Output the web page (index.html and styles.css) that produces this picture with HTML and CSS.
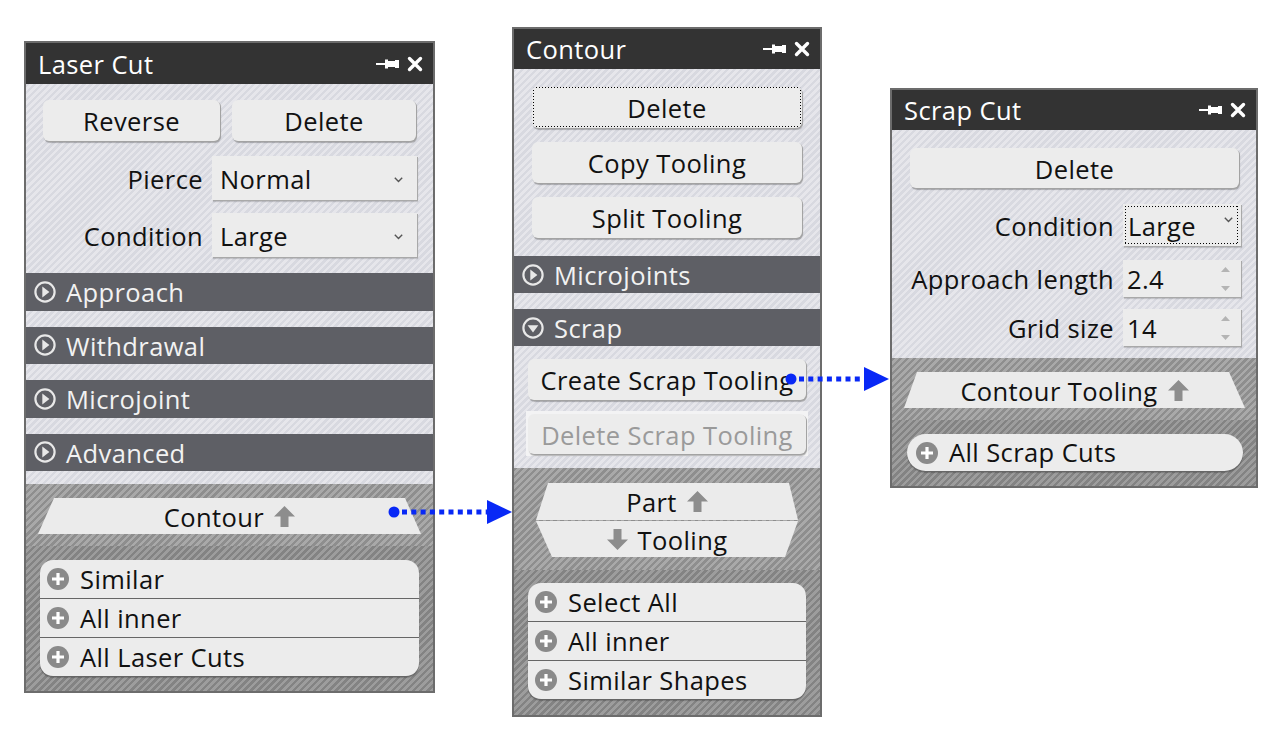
FILE: index.html
```html
<!DOCTYPE html>
<html>
<head>
<meta charset="utf-8">
<title>Tooling panels</title>
<link rel="stylesheet" href="styles.css">
</head>
<body>
<div class="desk">

  <section class="panel p1">
    <div class="head">
      <span class="title">Laser Cut</span>
      <span class="tools">
        <svg class="pin" width="24" height="12" viewBox="0 0 24 12"><path d="M0 5h9v2H0z M9 1.5h3v9H9z M12 3h8v6h-8z M19 2h4v8h-4z" fill="#fff"/></svg>
        <svg class="x" width="16" height="16" viewBox="0 0 16 16"><path d="M2.5 2.5L13.5 13.5M13.5 2.5L2.5 13.5" stroke="#fff" stroke-width="3.4" stroke-linecap="round"/></svg>
      </span>
    </div>
    <div class="light top1">
      <div class="btnrow">
        <div class="btn">Reverse</div>
        <div class="btn">Delete</div>
      </div>
      <div class="frow">
        <span class="lbl">Pierce</span>
        <div class="sel"><span>Normal</span><svg class="chev" width="9" height="6" viewBox="0 0 9 6"><path d="M0.8 0.8L4.5 4.5L8.2 0.8" fill="none" stroke="#555" stroke-width="1.4"/></svg></div>
      </div>
      <div class="frow">
        <span class="lbl">Condition</span>
        <div class="sel"><span>Large</span><svg class="chev" width="9" height="6" viewBox="0 0 9 6"><path d="M0.8 0.8L4.5 4.5L8.2 0.8" fill="none" stroke="#555" stroke-width="1.4"/></svg></div>
      </div>
    </div>
    <div class="light secs1">
      <div class="bar"><svg class="sico" width="22" height="22" viewBox="0 0 22 22"><circle cx="11" cy="11" r="9.6" fill="none" stroke="#e8e8e8" stroke-width="2.2"/><path d="M8.3 5.6L15.4 11L8.3 16.4z" fill="#e8e8e8"/></svg><span>Approach</span></div>
      <div class="bar"><svg class="sico" width="22" height="22" viewBox="0 0 22 22"><circle cx="11" cy="11" r="9.6" fill="none" stroke="#e8e8e8" stroke-width="2.2"/><path d="M8.3 5.6L15.4 11L8.3 16.4z" fill="#e8e8e8"/></svg><span>Withdrawal</span></div>
      <div class="bar"><svg class="sico" width="22" height="22" viewBox="0 0 22 22"><circle cx="11" cy="11" r="9.6" fill="none" stroke="#e8e8e8" stroke-width="2.2"/><path d="M8.3 5.6L15.4 11L8.3 16.4z" fill="#e8e8e8"/></svg><span>Microjoint</span></div>
      <div class="bar"><svg class="sico" width="22" height="22" viewBox="0 0 22 22"><circle cx="11" cy="11" r="9.6" fill="none" stroke="#e8e8e8" stroke-width="2.2"/><path d="M8.3 5.6L15.4 11L8.3 16.4z" fill="#e8e8e8"/></svg><span>Advanced</span></div>
    </div>
    <div class="nav nav1">
      <div class="trap up">
        <span>Contour</span>
        <svg class="arr" width="21" height="21" viewBox="0 0 21 21"><path d="M10.5 0L21 10.5H14.5V21H6.5V10.5H0z" fill="#8d8d8d"/></svg>
      </div>
    </div>
    <div class="listzone lz1">
      <div class="list">
        <div class="item"><svg class="plus" width="22" height="22" viewBox="0 0 22 22"><circle cx="11" cy="11" r="11" fill="#8a8a8a"/><path d="M5 9.4h12v3.2H5z M9.4 5h3.2v12H9.4z" fill="#fff"/></svg><span>Similar</span></div>
        <div class="item"><svg class="plus" width="22" height="22" viewBox="0 0 22 22"><circle cx="11" cy="11" r="11" fill="#8a8a8a"/><path d="M5 9.4h12v3.2H5z M9.4 5h3.2v12H9.4z" fill="#fff"/></svg><span>All inner</span></div>
        <div class="item"><svg class="plus" width="22" height="22" viewBox="0 0 22 22"><circle cx="11" cy="11" r="11" fill="#8a8a8a"/><path d="M5 9.4h12v3.2H5z M9.4 5h3.2v12H9.4z" fill="#fff"/></svg><span>All Laser Cuts</span></div>
      </div>
    </div>
  </section>

  <section class="panel p2">
    <div class="head">
      <span class="title">Contour</span>
      <span class="tools">
        <svg class="pin" width="24" height="12" viewBox="0 0 24 12"><path d="M0 5h9v2H0z M9 1.5h3v9H9z M12 3h8v6h-8z M19 2h4v8h-4z" fill="#fff"/></svg>
        <svg class="x" width="16" height="16" viewBox="0 0 16 16"><path d="M2.5 2.5L13.5 13.5M13.5 2.5L2.5 13.5" stroke="#fff" stroke-width="3.4" stroke-linecap="round"/></svg>
      </span>
    </div>
    <div class="light top2">
      <div class="btn focus">Delete</div>
      <div class="btn">Copy Tooling</div>
      <div class="btn">Split Tooling</div>
    </div>
    <div class="bar"><svg class="sico" width="22" height="22" viewBox="0 0 22 22"><circle cx="11" cy="11" r="9.6" fill="none" stroke="#e8e8e8" stroke-width="2.2"/><path d="M8.3 5.6L15.4 11L8.3 16.4z" fill="#e8e8e8"/></svg><span>Microjoints</span></div>
    <div class="light gap16"></div>
    <div class="bar"><svg class="sico" width="22" height="22" viewBox="0 0 22 22"><circle cx="11" cy="11" r="9.6" fill="none" stroke="#e8e8e8" stroke-width="2.2"/><path d="M5.6 8.3H16.4L11 15.4z" fill="#e8e8e8"/></svg><span>Scrap</span></div>
    <div class="light exp2">
      <div class="btn">Create Scrap Tooling</div>
      <div class="disabled"><div class="btn">Delete Scrap Tooling</div></div>
    </div>
    <div class="nav nav2">
      <div class="hex part">
        <span>Part</span>
        <svg class="arr" width="21" height="21" viewBox="0 0 21 21"><path d="M10.5 0L21 10.5H14.5V21H6.5V10.5H0z" fill="#8d8d8d"/></svg>
      </div>
      <div class="hex tool">
        <svg class="arr" width="21" height="21" viewBox="0 0 21 21"><path d="M10.5 21L21 10.5H14.5V0H6.5V10.5H0z" fill="#8d8d8d"/></svg>
        <span>Tooling</span>
      </div>
    </div>
    <div class="listzone lz2">
      <div class="list">
        <div class="item"><svg class="plus" width="22" height="22" viewBox="0 0 22 22"><circle cx="11" cy="11" r="11" fill="#8a8a8a"/><path d="M5 9.4h12v3.2H5z M9.4 5h3.2v12H9.4z" fill="#fff"/></svg><span>Select All</span></div>
        <div class="item"><svg class="plus" width="22" height="22" viewBox="0 0 22 22"><circle cx="11" cy="11" r="11" fill="#8a8a8a"/><path d="M5 9.4h12v3.2H5z M9.4 5h3.2v12H9.4z" fill="#fff"/></svg><span>All inner</span></div>
        <div class="item"><svg class="plus" width="22" height="22" viewBox="0 0 22 22"><circle cx="11" cy="11" r="11" fill="#8a8a8a"/><path d="M5 9.4h12v3.2H5z M9.4 5h3.2v12H9.4z" fill="#fff"/></svg><span>Similar Shapes</span></div>
      </div>
    </div>
  </section>

  <section class="panel p3">
    <div class="head">
      <span class="title">Scrap Cut</span>
      <span class="tools">
        <svg class="pin" width="24" height="12" viewBox="0 0 24 12"><path d="M0 5h9v2H0z M9 1.5h3v9H9z M12 3h8v6h-8z M19 2h4v8h-4z" fill="#fff"/></svg>
        <svg class="x" width="16" height="16" viewBox="0 0 16 16"><path d="M2.5 2.5L13.5 13.5M13.5 2.5L2.5 13.5" stroke="#fff" stroke-width="3.4" stroke-linecap="round"/></svg>
      </span>
    </div>
    <div class="light top3">
      <div class="btn del3">Delete</div>
      <div class="frow3 r-cond">
        <span class="lbl">Condition</span>
        <div class="sel sel3 focus2"><span>Large</span><svg class="chev" width="9" height="6" viewBox="0 0 9 6"><path d="M0.8 0.8L4.5 4.5L8.2 0.8" fill="none" stroke="#555" stroke-width="1.4"/></svg></div>
      </div>
      <div class="frow3 r-app">
        <span class="lbl">Approach length</span>
        <div class="sel num"><span>2.4</span><svg class="spin" width="11" height="26" viewBox="0 0 11 26"><path d="M1 6L5.5 1L10 6z M1 20L5.5 25L10 20z" fill="#b4b4b4"/></svg></div>
      </div>
      <div class="frow3 r-grid">
        <span class="lbl">Grid size</span>
        <div class="sel num"><span>14</span><svg class="spin" width="11" height="26" viewBox="0 0 11 26"><path d="M1 6L5.5 1L10 6z M1 20L5.5 25L10 20z" fill="#b4b4b4"/></svg></div>
      </div>
    </div>
    <div class="nav nav3">
      <div class="trap up">
        <span>Contour Tooling</span>
        <svg class="arr" width="21" height="21" viewBox="0 0 21 21"><path d="M10.5 0L21 10.5H14.5V21H6.5V10.5H0z" fill="#8d8d8d"/></svg>
      </div>
    </div>
    <div class="listzone lz3">
      <div class="list pill">
        <div class="item"><svg class="plus" width="22" height="22" viewBox="0 0 22 22"><circle cx="11" cy="11" r="11" fill="#8a8a8a"/><path d="M5 9.4h12v3.2H5z M9.4 5h3.2v12H9.4z" fill="#fff"/></svg><span>All Scrap Cuts</span></div>
      </div>
    </div>
  </section>

</div>

<svg class="links" width="1279" height="742" viewBox="0 0 1279 742">
  <g fill="#0828f6">
    <circle cx="394" cy="512" r="5.5"/>
    <polygon points="487,500 512,512 487,524"/>
    <circle cx="791" cy="379" r="5.5"/>
    <polygon points="864,367 889,379 864,391"/>
  </g>
  <g stroke="#0828f6" stroke-width="5" stroke-dasharray="5 4.3">
    <line x1="402" y1="512" x2="488" y2="512"/>
    <line x1="799" y1="379" x2="865" y2="379"/>
  </g>
</svg>
</body>
</html>
```

FILE: styles.css
```css
* { box-sizing: border-box; }

html, body {
  margin: 0;
  padding: 0;
  background: #ffffff;
}

body {
  position: relative;
  width: 1279px;
  height: 742px;
  overflow: hidden;
  font-family: "Open Sans", "Noto Sans", "DejaVu Sans", sans-serif;
  font-size: 25.5px;
  letter-spacing: 0.4px;
  line-height: 1;
  color: #111111;
}

.desk {
  display: flex;
  align-items: flex-start;
  padding-left: 24px;
}

.panel {
  display: flex;
  flex-direction: column;
  border: 2px solid #6c6c6c;
}

.p1 { width: 411px; margin-top: 41px; }
.p2 { width: 310px; margin-top: 27px; margin-left: 77px; }
.p3 { width: 368px; margin-top: 88px; margin-left: 68px; }

/* header */
.head {
  display: flex;
  align-items: center;
  justify-content: space-between;
  height: 40px;
  padding: 0 10px 0 12px;
  background: #333333;
  color: #ffffff;
}
.p1 .head { height: 41px; }
.title { padding-top: 2px; }
.tools {
  display: flex;
  align-items: center;
  gap: 7px;
}

/* backgrounds */
.light {
  background: repeating-linear-gradient(135deg, #d8d9e0 0 2.5px, #e6e6eb 2.5px 5px);
}
.nav {
  background: repeating-linear-gradient(135deg, #8e8e8e 0 2.5px, #a9a9a9 2.5px 5px);
}
.listzone {
  background: repeating-linear-gradient(135deg, #838383 0 2.5px, #9d9d9d 2.5px 5px);
}

/* buttons */
.btn {
  display: flex;
  align-items: center;
  justify-content: center;
  height: 41px;
  padding-top: 3px;
  background: #ececec;
  border-radius: 6px;
  box-shadow: 1px 1px 0 #a3a3a3, 1px 2px 1px rgba(0, 0, 0, 0.25);
  white-space: nowrap;
}

/* dotted keyboard-focus rectangle */
.focus, .focus2 { position: relative; }
.focus::after, .focus2::after {
  content: "";
  position: absolute;
  pointer-events: none;
  background:
    linear-gradient(90deg, #000 1.2px, transparent 1.2px) left top / 3px 1px repeat-x,
    linear-gradient(90deg, #000 1.2px, transparent 1.2px) left bottom / 3px 1px repeat-x,
    linear-gradient(180deg, #000 1.2px, transparent 1.2px) left top / 1px 3px repeat-y,
    linear-gradient(180deg, #000 1.2px, transparent 1.2px) right top / 1px 3px repeat-y;
}
.focus::after { inset: 0 1px 1px 1px; border-radius: 3px; }
.focus2::after { inset: 2px 3px 2px 2px; }

/* selects / inputs */
.sel {
  display: flex;
  align-items: center;
  justify-content: space-between;
  background: #ececec;
  padding: 3px 14px 0 8px;
  box-shadow: 1px 1px 0 #a9a9a9, 1px 2px 1px rgba(0, 0, 0, 0.15);
}
.lbl {
  text-align: right;
  padding-top: 3px;
  white-space: nowrap;
}

/* panel 1 top */
.top1 {
  display: flex;
  flex-direction: column;
  padding: 16px 16px 16px 17px;
}
.btnrow {
  display: grid;
  grid-template-columns: 177px 184px;
  gap: 12px;
  margin-bottom: 15px;
}
.frow {
  display: grid;
  grid-template-columns: 1fr 205px;
  align-items: center;
  gap: 9px;
  height: 44px;
}
.frow + .frow { margin-top: 13px; }
.frow .sel { height: 44px; }

/* section bars */
.bar {
  display: flex;
  align-items: center;
  height: 37px;
  padding-left: 8px;
  background: #5e5f65;
  color: #f2f2f2;
}
.bar .sico { margin-right: 10px; flex: none; }
.bar span { padding-top: 2px; }

.secs1 {
  display: flex;
  flex-direction: column;
  gap: 16px;
  padding-bottom: 13px;
}
.secs1 .bar { height: 37.5px; }

/* nav (trapezoid) buttons */
.trap, .hex {
  display: flex;
  align-items: center;
  justify-content: center;
  gap: 10px;
  background: #ebebeb;
}
.trap { height: 36px; }
.trap span, .hex span { padding-top: 3px; }
.trap.up {
  clip-path: polygon(16px 0, calc(100% - 16px) 0, 100% 100%, 0 100%);
}
.nav1 { padding: 14px 12px 12px 12px; }
.nav3 { padding: 14px 11px 12px 12px; }
.nav3 .trap.up {
  clip-path: polygon(13px 0, calc(100% - 16px) 0, 100% 100%, 0 100%);
}

/* list */
.list {
  display: flex;
  flex-direction: column;
  gap: 1px;
}
.item {
  display: flex;
  align-items: center;
  height: 38px;
  padding-left: 7px;
  background: #ececec;
  box-shadow: 0 1px 0 #666666, 0 2px 1px rgba(0, 0, 0, 0.2);
}
.item .plus { margin-right: 11px; flex: none; }
.item span { padding-top: 1px; }
.item:first-child { border-radius: 13px 13px 0 0; }
.item:last-child { border-radius: 0 0 13px 13px; }
.pill .item { border-radius: 19px; height: 37px; padding-left: 9px; }

.lz1 { padding: 14px 14px 15px 14px; }

/* panel 2 */
.top2 {
  display: flex;
  flex-direction: column;
  gap: 14px;
  padding: 18px 18px;
}
.gap16 { height: 16px; }
.exp2 {
  display: flex;
  flex-direction: column;
  gap: 11px;
  padding: 13px 14px 12px 14px;
}
.disabled {
  margin: 0 -2px;
  padding: 3px 2px 2px 2px;
  background: #f3f3f4;
}
.disabled .btn {
  height: 40px;
  color: #9a9a9a;
}
.nav2 {
  display: flex;
  flex-direction: column;
  gap: 1px;
  padding: 15px 22px 13px 22px;
}
.hex { height: 37px; }
.hex.part {
  clip-path: polygon(12px 0, calc(100% - 9px) 0, 100% 100%, 0 100%);
}
.hex.tool {
  height: 36px;
  clip-path: polygon(0 0, 100% 0, calc(100% - 13px) 100%, 16px 100%);
}
.lz2 { padding: 13px 14px 16px 14px; }

/* panel 3 */
.top3 {
  display: flex;
  flex-direction: column;
  padding: 18px 15px 12px 18px;
}
.del3 { height: 40px; margin-right: 2px; }
.frow3 {
  display: grid;
  grid-template-columns: 1fr 118px;
  align-items: center;
  gap: 9px;
}
.r-cond { margin-top: 16px; }
.r-cond .sel { height: 42px; padding-left: 5px; padding-right: 8px; }
.r-cond .chev { align-self: flex-start; margin-top: 10px; }
.r-app { margin-top: 14px; }
.r-grid { margin-top: 12px; }
.num { height: 37px; padding-left: 4px; padding-right: 10px; }
.num .spin { margin-top: -3px; }
.lz3 { padding: 14px 13px 15px 15px; }

/* connectors */
.links {
  position: absolute;
  left: 0;
  top: 0;
  pointer-events: none;
}
```
